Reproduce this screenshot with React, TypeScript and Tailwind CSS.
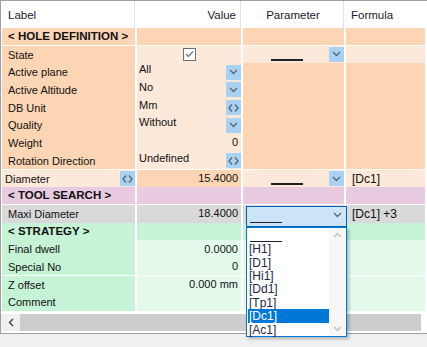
import React from 'react';

const PEACH = 'bg-[#fcd5b4]';
const PEACH_L = 'bg-[#fde9d9]';
const PINK = 'bg-[#e8cbe0]';
const GRAY = 'bg-[#d9d9d9]';
const GREEN = 'bg-[#c6f2d6]';
const GREEN_L = 'bg-[#e3f9ea]';

function Chevron() {
  return (
    <svg width="9" height="6" viewBox="0 0 9 6">
      <path d="M1 1 L4.5 4.5 L8 1" fill="none" stroke="#5b6570" strokeWidth="1.3" />
    </svg>
  );
}

function Arrows() {
  return (
    <svg width="11" height="8" viewBox="0 0 11 8">
      <path d="M4 0.5 L1 4 L4 7.5 M7 0.5 L10 4 L7 7.5" fill="none" stroke="#5b6570" strokeWidth="1.3" />
    </svg>
  );
}

function BlueBtn({ kind }: { kind: 'down' | 'lr' }) {
  return (
    <div className="w-[15px] h-[15px] bg-[#a9d1f2] flex items-center justify-center shrink-0">
      {kind === 'down' ? <Chevron /> : <Arrows />}
    </div>
  );
}

function Blank() {
  return <div className="w-[32px] h-[1.5px] bg-[#222]" />;
}

function Cell({ bg, className = '', children }: { bg: string; className?: string; children?: React.ReactNode }) {
  return <div className={`${bg} h-full flex min-w-0 ${className}`}>{children}</div>;
}

type Row = {
  label: React.ReactNode;
  bold?: boolean;
  bgs: [string, string, string, string];
  value?: React.ReactNode;
  valueAlign?: 'left' | 'right';
  valueBtn?: 'down' | 'lr';
  labelBtn?: boolean;
  param?: 'combo' | 'open';
  formula?: string;
};

const rows: Row[] = [
  { label: '< HOLE DEFINITION >', bold: true, bgs: [PEACH, PEACH, PEACH, PEACH] },
  { label: 'State', bgs: [PEACH, PEACH_L, PEACH_L, PEACH_L], value: 'check', param: 'combo' },
  { label: 'Active plane', bgs: [PEACH, PEACH_L, PEACH, PEACH], value: 'All', valueAlign: 'left', valueBtn: 'down' },
  { label: 'Active Altitude', bgs: [PEACH, PEACH_L, PEACH, PEACH], value: 'No', valueAlign: 'left', valueBtn: 'down' },
  { label: 'DB Unit', bgs: [PEACH, PEACH_L, PEACH, PEACH], value: 'Mm', valueAlign: 'left', valueBtn: 'lr' },
  { label: 'Quality', bgs: [PEACH, PEACH_L, PEACH, PEACH], value: 'Without', valueAlign: 'left', valueBtn: 'down' },
  { label: 'Weight', bgs: [PEACH, PEACH_L, PEACH, PEACH], value: '0', valueAlign: 'right' },
  { label: 'Rotation Direction', bgs: [PEACH, PEACH_L, PEACH, PEACH], value: 'Undefined', valueAlign: 'left', valueBtn: 'lr' },
  { label: 'Diameter', labelBtn: true, bgs: [PEACH_L, PEACH, PEACH_L, PEACH_L], value: '15.4000', valueAlign: 'right', param: 'combo', formula: '[Dc1]' },
  { label: '< TOOL SEARCH >', bold: true, bgs: [PINK, PINK, PINK, PINK] },
  { label: 'Maxi Diameter', bgs: [GRAY, GRAY, GRAY, GRAY], value: '18.4000', valueAlign: 'right', param: 'open', formula: '[Dc1] +3' },
  { label: '< STRATEGY >', bold: true, bgs: [GREEN, GREEN, GREEN, GREEN] },
  { label: 'Final dwell', bgs: [GREEN, GREEN_L, GREEN_L, GREEN_L], value: '0.0000', valueAlign: 'right' },
  { label: 'Special No', bgs: [GREEN, GREEN_L, GREEN_L, GREEN_L], value: '0', valueAlign: 'right' },
  { label: 'Z offset', bgs: [GREEN, GREEN_L, GREEN_L, GREEN_L], value: '0.000 mm', valueAlign: 'right' },
  { label: 'Comment', bgs: [GREEN, GREEN_L, GREEN_L, GREEN_L] },
];

const listItems = ['[H1]', '[D1]', '[Hi1]', '[Dd1]', '[Tp1]', '[Dc1]', '[Ac1]'];

const COLS = 'grid grid-cols-[133px_104px_101px_79px] gap-x-[2px]';

export default function App() {
  return (
    <div className="relative w-[427px] h-[347px] bg-[#f0f0f0] overflow-hidden text-[11px] text-[#111] [font-family:'Liberation_Sans',Arial,sans-serif]">
      <div className="h-[333px] bg-white border-l border-t border-[#a0a0a0] flex flex-col">
        {/* header */}
        <div className={`${COLS} h-[27px] pl-[1px] text-[11.5px] text-[#1a1a2a]`}>
          <div className="flex items-center pt-[2px] pl-[6px] border-r border-[#e3e3e3]">Label</div>
          <div className="flex items-center pt-[2px] justify-end pr-[4px] border-r border-[#e3e3e3]">Value</div>
          <div className="flex items-center pt-[2px] justify-center border-r border-[#e3e3e3]">Parameter</div>
          <div className="flex items-center pt-[2px] pl-[5px]">Formula</div>
        </div>
        {/* body */}
        <div className="flex flex-col gap-y-px pl-[1px]">
          {rows.map((r, i) => (
            <div key={i} className={`${COLS} h-[16.7px]`}>
              <Cell bg={r.bgs[0]} className={`items-center ${r.labelBtn ? 'pl-[3px] justify-between' : 'pl-[6px]'}`}>
                <span className={`whitespace-nowrap ${r.bold ? 'font-bold text-[11.5px]' : 'pt-px'}`}>{r.label}</span>
                {r.labelBtn && <BlueBtn kind="lr" />}
              </Cell>
              <Cell
                bg={r.bgs[1]}
                className={
                  r.value === 'check'
                    ? 'items-center justify-center'
                    : r.valueAlign === 'left'
                    ? 'items-start justify-between pl-[2px]'
                    : 'items-center justify-end pr-[3px]'
                }
              >
                {r.value === 'check' ? (
                  <div className="w-[13px] h-[13px] border border-[#707070] bg-white flex items-center justify-center">
                    <svg width="9" height="8" viewBox="0 0 9 8">
                      <path d="M1 4 L3.5 6.5 L8 1.5" fill="none" stroke="#707070" strokeWidth="1.2" />
                    </svg>
                  </div>
                ) : (
                  <>
                    <span className="whitespace-nowrap leading-[13px]">{r.value}</span>
                    {r.valueBtn && (
                      <div className="self-center">
                        <BlueBtn kind={r.valueBtn} />
                      </div>
                    )}
                  </>
                )}
              </Cell>
              <Cell bg={r.bgs[2]} className="items-center">
                {r.param === 'combo' && (
                  <>
                    <div className="pl-[28px] pt-[11px]">
                      <Blank />
                    </div>
                    <div className="ml-auto">
                      <BlueBtn kind="down" />
                    </div>
                  </>
                )}
              </Cell>
              <Cell bg={r.bgs[3]} className="items-center pl-[6px]">
                {r.formula && <span className="whitespace-nowrap text-[12px]">{r.formula}</span>}
              </Cell>
            </div>
          ))}
        </div>
        {/* horizontal scrollbar */}
        <div className="mt-[4px] h-[17px] flex">
          <div className="w-[19px] bg-[#f0f0f0] flex items-center justify-center">
            <svg width="6" height="9" viewBox="0 0 6 9">
              <path d="M5 1 L1.5 4.5 L5 8" fill="none" stroke="#444" strokeWidth="1.4" />
            </svg>
          </div>
          <div className="flex-1 bg-[#cdcdcd] mr-[6px]" />
        </div>
      </div>
      <div className="h-px bg-[#a0a0a0]" />

      {/* open combo on Maxi Diameter */}
      <div className="absolute left-[246px] top-[206px] w-[101px] h-[21px] bg-[#cce4f7] border border-[#0062b8] flex items-end justify-between pl-[3px] pr-[4px] pb-[3px]">
        <Blank />
        <div className="self-center">
          <Chevron />
        </div>
      </div>
      <div className="absolute left-[246px] top-[227px] w-[101px] h-[110px] bg-white border border-[#0078d7] shadow-[2px_2px_3px_rgba(0,0,0,0.25)] flex">
        <div className="flex-1 flex flex-col pl-[1px] pt-[1px] text-[12px] text-[#1f2a44]">
          <div className="h-[13.4px] flex items-end pl-[2px]">
            <Blank />
          </div>
          {listItems.map((t) => (
            <div
              key={t}
              className={`h-[13.4px] leading-[15px] pl-[1px] ${t === '[Dc1]' ? 'bg-[#0078d7] text-white' : ''}`}
            >
              {t}
            </div>
          ))}
        </div>
        <div className="w-[17px] bg-[#f7f7f7] flex flex-col justify-between items-center py-[4px]">
          <svg width="9" height="6" viewBox="0 0 9 6">
            <path d="M1 5 L4.5 1.5 L8 5" fill="none" stroke="#c0c0c0" strokeWidth="1.3" />
          </svg>
          <svg width="9" height="6" viewBox="0 0 9 6">
            <path d="M1 1 L4.5 4.5 L8 1" fill="none" stroke="#c0c0c0" strokeWidth="1.3" />
          </svg>
        </div>
      </div>
    </div>
  );
}
